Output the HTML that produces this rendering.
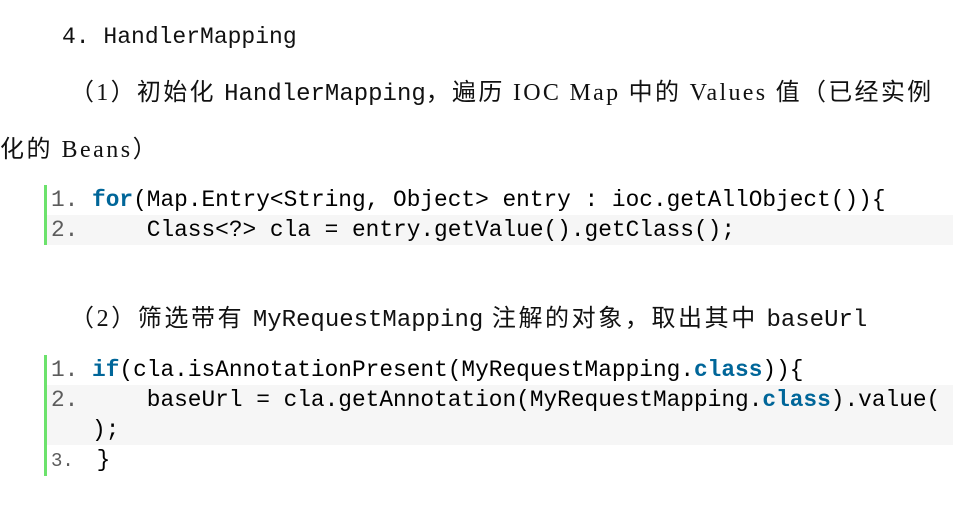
<!DOCTYPE html>
<html><head><meta charset="utf-8"><style>
body{margin:0;width:972px;height:514px;background:#fff;position:relative;overflow:hidden;font-family:"Liberation Serif","Noto Sans CJK SC",serif;color:#111}
.t{position:absolute;font-size:24px;white-space:nowrap;line-height:30px}
.m{font-family:"Liberation Mono","Noto Sans CJK SC",monospace}
.code{position:absolute;left:44px;border-left:3px solid #6ce26c;font-family:"Liberation Mono",monospace;font-size:22.8px;line-height:30px;width:906px}
.code div{padding-left:4px;white-space:pre;color:#000}
.code .alt{background:#f6f6f6}
.n{color:#5c5c5c}
.k{color:#006699;font-weight:bold}
</style></head><body>
<div class="t m" style="left:62px;top:22px;font-size:23px">4. HandlerMapping</div>
<div class="t" style="left:70px;top:78px;letter-spacing:2.3px">（1）初始化 <span class="m" style="letter-spacing:0">HandlerMapping</span>，遍历 IOC Map 中的 Values 值（已经实例</div>
<div class="t" style="left:0;top:135px;letter-spacing:2.5px">化的 Beans）</div>
<div class="code" style="top:185px">
<div><span class="n">1. </span><span class="k">for</span>(Map.Entry&lt;String, Object&gt; entry : ioc.getAllObject()){</div>
<div class="alt"><span class="n">2. </span>    Class&lt;?&gt; cla = entry.getValue().getClass();</div>
</div>
<div class="t" style="left:70px;top:304px;letter-spacing:2.6px">（2）筛选带有 <span class="m" style="letter-spacing:0">MyRequestMapping</span> 注解的对象，取出其中 <span class="m" style="letter-spacing:0">baseUrl</span></div>
<div class="code" style="top:355px">
<div><span class="n">1. </span><span class="k">if</span>(cla.isAnnotationPresent(MyRequestMapping.<span class="k">class</span>)){</div>
<div class="alt"><span class="n">2. </span>    baseUrl = cla.getAnnotation(MyRequestMapping.<span class="k">class</span>).value(
   );</div>
<div><span class="n" style="font-size:19px">3.  </span>}</div>
</div>
</body></html>
